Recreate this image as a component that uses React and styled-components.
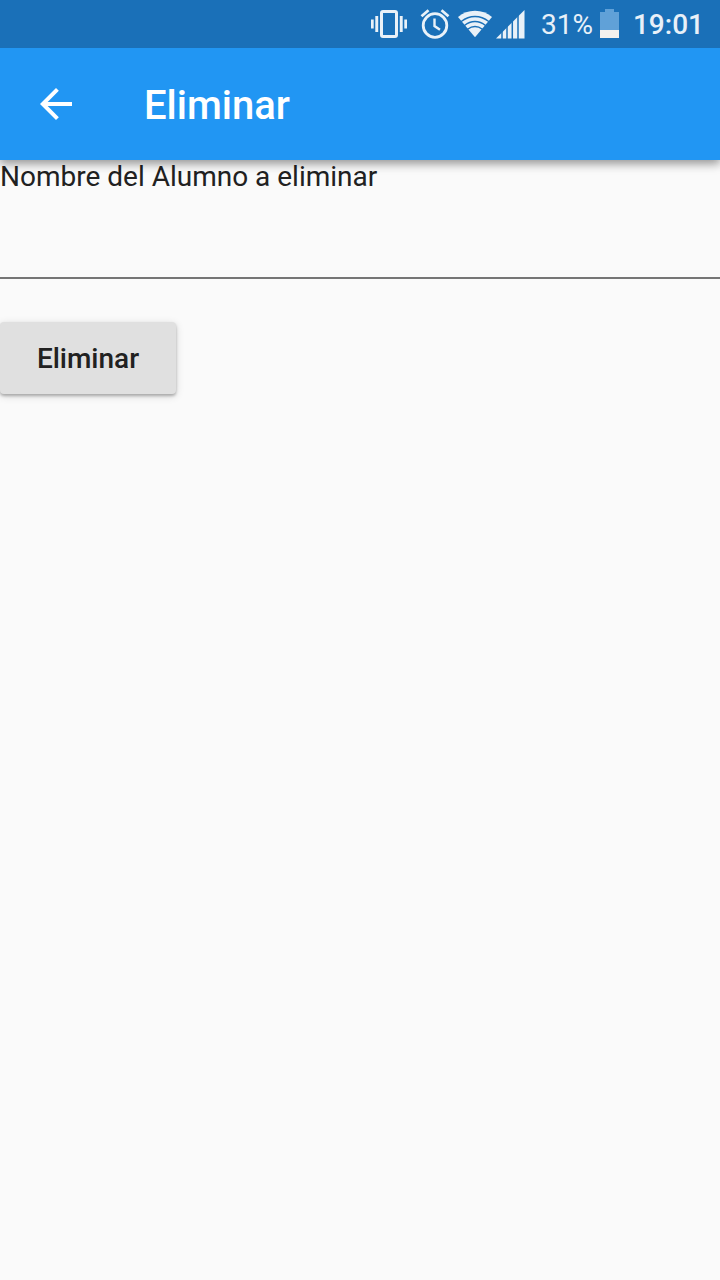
import React from "react";
import styled, { createGlobalStyle } from "styled-components";

const GlobalStyle = createGlobalStyle`
  * { box-sizing: border-box; }
  body {
    margin: 0;
    background: #fafafa;
    color: #212121;
    font-family: Roboto, "Liberation Sans", sans-serif;
  }
`;

const Screen = styled.div`
  min-height: 100vh;
  display: flex;
  flex-direction: column;
`;

const StatusBar = styled.div`
  position: relative;
  z-index: 1;
  display: flex;
  align-items: center;
  justify-content: flex-end;
  height: 48px;
  padding-right: 16px;
  background: #1a70b8;
  color: #e8f0f8;
`;

const StatusIcon = styled.svg`
  display: block;
  flex: none;
  margin-right: ${(p) => p.$gap}px;
  fill: #e9f1f8;
`;

const StatusText = styled.span`
  font-size: 28px;
  line-height: 48px;
  padding-top: 2px;
  font-weight: ${(p) => (p.$strong ? 500 : 400)};
  margin-right: ${(p) => p.$gap || 0}px;
`;

const AppBar = styled.header`
  position: relative;
  display: flex;
  align-items: center;
  gap: 64px;
  height: 112px;
  padding: 0 32px;
  background: #2196f3;
  color: #fff;
  box-shadow: 0 4px 8px rgba(0, 0, 0, 0.24), 0 2px 12px rgba(0, 0, 0, 0.24);
`;

const BackButton = styled.button`
  display: flex;
  padding: 0;
  border: 0;
  background: none;
  color: inherit;
  cursor: pointer;
`;

const Title = styled.h1`
  margin: 0;
  padding-top: 4px;
  font-size: 40px;
  line-height: 48px;
  font-weight: 500;
`;

const Form = styled.form`
  display: flex;
  flex-direction: column;
  align-items: flex-start;
`;

const Label = styled.label`
  font-size: 28px;
  line-height: 34px;
`;

const TextField = styled.input`
  width: 100%;
  height: 85px;
  padding: 22px 0 16px;
  border: 0;
  border-bottom: 2px solid #757575;
  border-radius: 0;
  outline: 0;
  background: transparent;
  color: inherit;
  font: 32px/40px Roboto, sans-serif;
`;

const RaisedButton = styled.button`
  min-width: 176px;
  height: 72px;
  margin-top: 43px;
  padding: 2px 32px 0;
  border: 0;
  border-radius: 4px;
  background: #e0e0e0;
  color: #212121;
  font: 500 28px/32px Roboto, sans-serif;
  box-shadow: 0 2px 3px rgba(0, 0, 0, 0.26), 0 2px 8px rgba(0, 0, 0, 0.14);
  cursor: pointer;
`;

function VibrateIcon() {
  return (
    <StatusIcon width="36" height="28" viewBox="0 0 36 28" $gap={13} aria-hidden="true">
      <rect x="10.500" y="1.500" width="15" height="25" rx="1.500" fill="none" stroke="#e9f1f8" strokeWidth="3" />
      <path d="M0 9.500h2.700v9H0zM4.300 6h2.900v16H4.300zM28.800 6h2.900v16h-2.900zM33.300 9.500H36v9h-2.700z" />
    </StatusIcon>
  );
}

function AlarmIcon() {
  return (
    <StatusIcon width="30" height="30" viewBox="0 0 30 30" $gap={8} aria-hidden="true">
      <g fill="none" stroke="#e9f1f8" strokeWidth="2.800">
        <circle cx="15" cy="16.500" r="11.800" />
        <path d="M1.500 7.200 8.500 1.300M28.500 7.200 21.500 1.300" />
        <path d="M14.500 9.500v7.500l5.500 3.800" strokeWidth="2.400" />
      </g>
    </StatusIcon>
  );
}

function WifiIcon() {
  return (
    <StatusIcon width="34" height="28" viewBox="0 0 34 28" $gap={4} aria-hidden="true">
      <path d="M17 27.300 0 7A26.600 26.600 0 0 1 34 7z" />
      <g fill="none" stroke="#1a70b8" strokeWidth="1.400" strokeLinecap="square">
        <path d="M3.600 11.300A21 21 0 0 1 30.400 11.300" />
        <path d="M6.800 15.200A16 16 0 0 1 27.200 15.200" />
        <path d="M10 19A11 11 0 0 1 24 19" />
      </g>
    </StatusIcon>
  );
}

function SignalIcon() {
  return (
    <StatusIcon width="29" height="29" viewBox="0 0 29 29" $gap={16} aria-hidden="true">
      <path d="M0 28.500 28.500 0v28.500z" />
      <path
        d="M6 18v11M11 14v15M16.300 9v20M22 4v25"
        fill="none"
        stroke="#1a70b8"
        strokeWidth="1.500"
      />
    </StatusIcon>
  );
}

function BatteryIcon() {
  return (
    <StatusIcon width="19" height="30" viewBox="0 0 19 30" $gap={14} aria-hidden="true">
      <path fill="#60a1d8" d="M5 0h9v3h5v19H0V3h5z" />
      <path fill="#f3f1ee" d="M0 21h19v8H0z" />
    </StatusIcon>
  );
}

export default function App() {
  return (
    <Screen>
      <GlobalStyle />
      <StatusBar>
        <VibrateIcon />
        <AlarmIcon />
        <WifiIcon />
        <SignalIcon />
        <StatusText $gap={7}>31%</StatusText>
        <BatteryIcon />
        <StatusText $strong>19:01</StatusText>
      </StatusBar>
      <AppBar>
        <BackButton type="button" aria-label="Atrás">
          <svg width="48" height="48" viewBox="0 0 24 24" fill="currentColor" aria-hidden="true">
            <path d="M20 11H7.830l5.590-5.590L12 4l-8 8 8 8 1.410-1.410L7.830 13H20v-2z" />
          </svg>
        </BackButton>
        <Title>Eliminar</Title>
      </AppBar>
      <Form onSubmit={(e) => e.preventDefault()}>
        <Label htmlFor="alumno">Nombre del Alumno a eliminar</Label>
        <TextField id="alumno" type="text" />
        <RaisedButton type="submit">Eliminar</RaisedButton>
      </Form>
    </Screen>
  );
}
